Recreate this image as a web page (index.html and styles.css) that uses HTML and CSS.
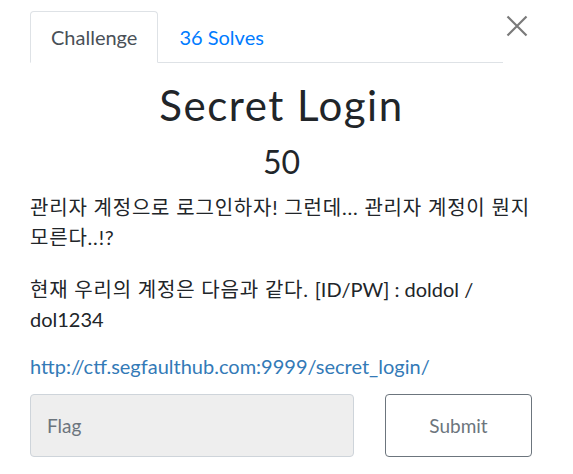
FILE: index.html
```html
<!DOCTYPE html>
<html lang="ko">
<head>
<meta charset="utf-8">
<link rel="stylesheet" href="styles.css">
</head>
<body>
<div class="modal">
  <button class="close" aria-label="Close">
    <svg width="22" height="22" viewBox="0 0 22 22"><path d="M1.5 1.5 L20.5 20.5 M20.5 1.5 L1.5 20.5" stroke="#7a7a7a" stroke-width="2.2" fill="none"/></svg>
  </button>
  <div class="tabs">
    <div class="tab active">Challenge</div>
    <div class="tab link">36 Solves</div>
  </div>
  <h3 class="title">Secret Login</h3>
  <h4 class="value">50</h4>
  <div class="desc">
    <p class="p1 ko">관리자 계정으로 로그인하자! 그런데... 관리자 계정이 뭔지 모른다..!?</p>
    <p class="p2 ko">현재 우리의 계정은 다음과 같다. <span class="lat">[ID/PW] : doldol / dol1234</span></p>
    <p class="p3"><a href="#">http://ctf.segfaulthub.com:9999/secret_login/</a></p>
  </div>
  <form class="submit-row">
    <input class="flag" type="text" placeholder="Flag">
    <button class="submit" type="button">Submit</button>
  </form>
</div>
</body>
</html>
```
FILE: styles.css
```css
html, body {
  margin: 0;
  padding: 0;
  background: #fff;
}
body {
  font-family: Lato, "Noto Sans CJK KR", sans-serif;
  color: #212529;
  width: 573px;
  height: 474px;
  overflow: hidden;
}
.modal {
  position: relative;
  padding: 11px 40px 0 30px;
}
.close {
  position: absolute;
  top: 15px;
  left: 506px;
  border: 0;
  background: none;
  padding: 0;
  width: 22px;
  height: 22px;
}
.close svg { display: block; }
.tabs {
  display: flex;
  width: 473px;
  border-bottom: 1px solid #dee2e6;
}
.tab {
  font-size: 20px;
  line-height: 24px;
  padding: 13px 20px 13px 20px;
  border: 1px solid transparent;
  border-radius: 4px 4px 0 0;
  margin-bottom: -1px;
}
.tab.active {
  color: #495057;
  border-color: #dee2e6 #dee2e6 #fff;
  background: #fff;
}
.tab.link {
  color: #007bff;
}
.title {
  margin: 17px 0 0;
  text-align: center;
  font-size: 42px;
  font-weight: 400;
  letter-spacing: 1.5px;
  line-height: 50px;
  width: 503px;
}
.value {
  margin: 13px 0 0;
  text-align: center;
  font-size: 32px;
  font-weight: 400;
  line-height: 38px;
  width: 503px;
}
.desc {
  width: 506px;
  margin-top: 11px;
  font-size: 20px;
  line-height: 30px;
  word-break: keep-all;
}
.desc p {
  margin: 0;
}
.desc .p1 { margin-bottom: 22px; }
.desc .p2 { margin-bottom: 17px; }
.desc .p3 { margin-bottom: 13px; }
.ko {
  letter-spacing: 0.8px;
}
.lat {
  letter-spacing: 0;
}
.desc a {
  color: #337ab7;
  text-decoration: none;
}
.submit-row {
  display: flex;
  gap: 31px;
  width: 502px;
  margin: 0;
}
.flag {
  box-sizing: border-box;
  width: 324px;
  height: 63px;
  border: 1px solid #ced4da;
  border-radius: 4px;
  background: #eeeeee;
  padding: 0 16px;
  font-family: Lato, sans-serif;
  font-size: 19px;
  color: #495057;
}
.flag::placeholder { color: #6c757d; }
.submit {
  box-sizing: border-box;
  width: 147px;
  height: 63px;
  border: 1px solid #6c757d;
  border-radius: 4px;
  background: #fff;
  color: #6c757d;
  font-family: Lato, sans-serif;
  font-size: 19px;
}
```
